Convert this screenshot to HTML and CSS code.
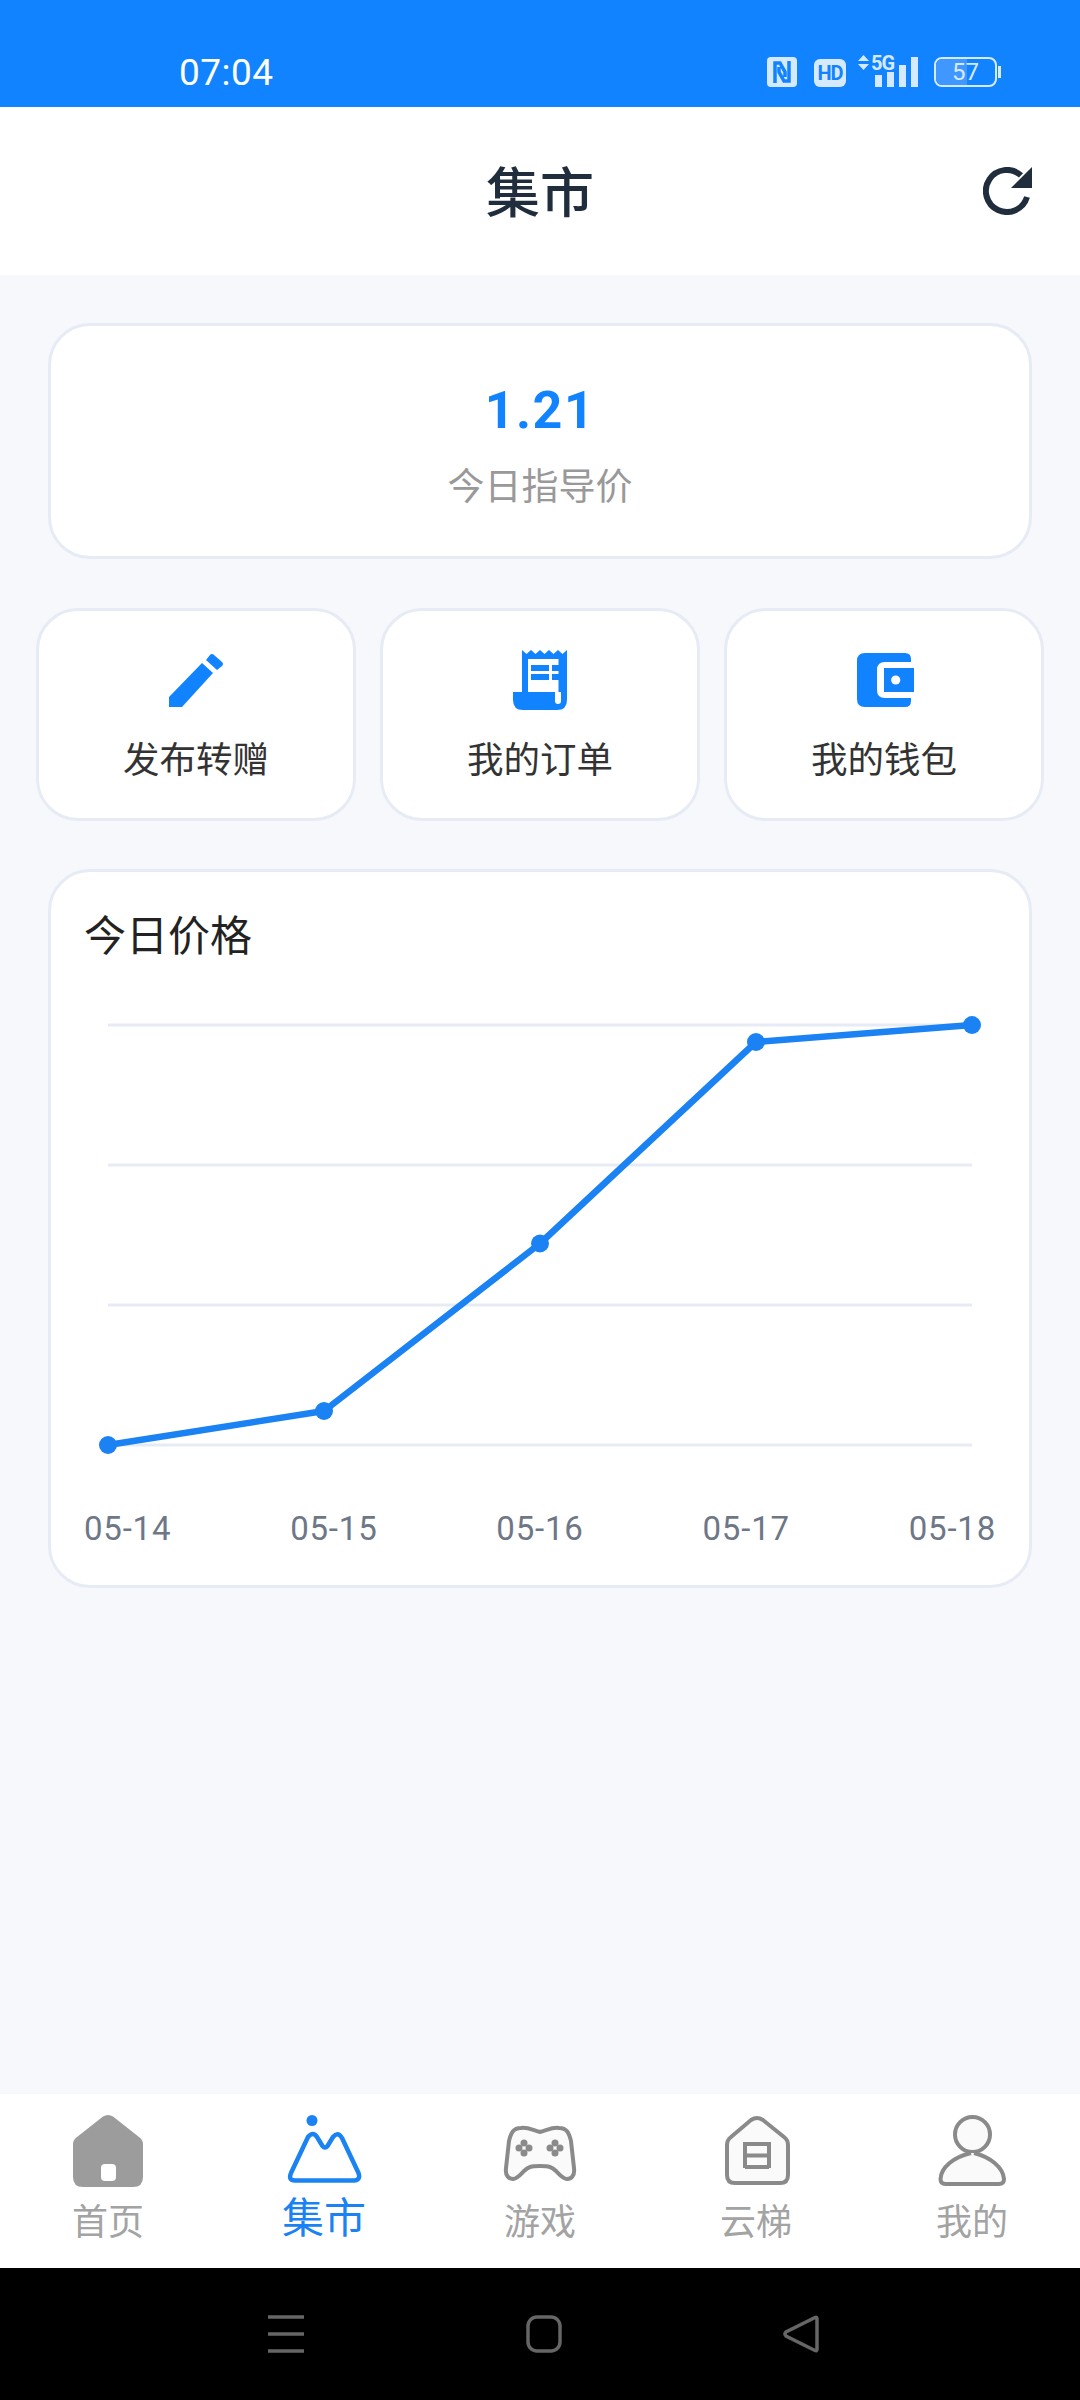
FILE: index.html
```html
<!DOCTYPE html>
<html lang="zh-CN">
<head>
<meta charset="UTF-8">
<meta name="viewport" content="width=device-width, initial-scale=1.0">
<title>集市</title>
<link rel="stylesheet" href="styles.css">
</head>
<body>

<div class="phone">
    <div class="status-bar">
        <span class="clock">07:04</span>
        <div class="status-icons">
            <svg width="30" height="30" viewBox="0 0 30 30">
                <rect width="30" height="30" rx="4" fill="#d6eaff"/>
                <path d="M8 26V6h5l5 9v5M22 4v20h-5l-5-9v-5" fill="none" stroke="#1283ff" stroke-width="3.500"/>
            </svg>
            <span class="hd">HD</span>
            <div class="signal">
                <svg width="11" height="15" viewBox="0 0 11 15"><path d="M5.500 0L11 6H0zM5.500 15L0 9h11z" fill="#d6eaff"/></svg>
                <span class="five-g">5G</span>
                <div class="bars">
                    <i class="b1"></i><i class="b2"></i><i class="b3"></i><i class="b4"></i>
                </div>
            </div>
            <div class="battery">
                <div class="battery-fill"></div>
                <span class="battery-num">57</span>
            </div>
            <div class="battery-tip"></div>
        </div>
    </div>

    <div class="header">
        <h1>集市</h1>
        <svg class="refresh" width="50" height="48" viewBox="0 0 50 48">
            <path d="M44 30A21 21 0 1 1 38 8.400" fill="none" stroke="#1f2d3d" stroke-width="6"/>
            <path d="M49 0v21H28z" fill="#1f2d3d"/>
        </svg>
    </div>

    <div class="content">
        <div class="card price-card">
            <div class="price">1.21</div>
            <div class="price-label">今日指导价</div>
        </div>

        <div class="tiles">
            <div class="tile">
                <svg width="54" height="60" viewBox="0 0 54 60">
                    <path d="M0 47L33 13l11 10-31 34H0z" fill="#1283ff"/>
                    <path d="M37 10l4-5q2-2 4 0l8 7q2 2 0 4l-5 4z" fill="#1283ff"/>
                </svg>
                <span>发布转赠</span>
            </div>
            <div class="tile">
                <svg width="54" height="60" viewBox="0 0 54 60">
                    <path d="M9 0l4.500 4L18 0l4.500 4L27 0l4.500 4L36 0l4.500 4L45 0l4.500 4L54 0v50q0 10-10 10H10Q0 60 0 50v-8h9z" fill="#1283ff"/>
                    <path d="M15 9h30.500v33H48v9q0 3-3 3t-3-3v-9H15z" fill="#fff"/>
                    <path d="M18 15h18v6H18zM39 15h7v6h-7zM18 24h18v6H18zM39 24h7v6h-7z" fill="#1283ff"/>
                </svg>
                <span>我的订单</span>
            </div>
            <div class="tile">
                <svg class="wallet" width="54" height="60" viewBox="0 0 54 60">
                    <path d="M8 3h40q6 0 6 6v3H28q-8 0-8 8v20q0 8 8 8h26v3q0 6-6 6H8q-8 0-8-8V11q0-8 8-8z" fill="#1283ff"/>
                    <path d="M27 18h30v24H27z" fill="#1283ff"/>
                    <circle cx="38.700" cy="30" r="4.600" fill="#fff"/>
                </svg>
                <span>我的钱包</span>
            </div>
        </div>

        <div class="card chart-card">
            <div class="chart-title">今日价格</div>
            <svg class="chart" width="984" height="520" viewBox="0 0 984 520">
                <g stroke="#e6ebf5" stroke-width="3">
                    <line x1="60" y1="85" x2="924" y2="85"/>
                    <line x1="60" y1="225" x2="924" y2="225"/>
                    <line x1="60" y1="365" x2="924" y2="365"/>
                    <line x1="60" y1="505" x2="924" y2="505"/>
                </g>
                <polyline points="60,505 276,471 492,303.500 708,102 924,85" fill="none" stroke="#1a82f2" stroke-width="6.500" stroke-linejoin="round"/>
                <g fill="#1a82f2">
                    <circle cx="60" cy="505" r="9"/>
                    <circle cx="276" cy="471" r="9"/>
                    <circle cx="492" cy="303.500" r="9"/>
                    <circle cx="708" cy="102" r="9"/>
                    <circle cx="924" cy="85" r="9"/>
                </g>
            </svg>
            <div class="chart-labels">
                <span>05-14</span><span>05-15</span><span>05-16</span><span>05-17</span><span>05-18</span>
            </div>
        </div>
    </div>

    <div class="tabbar">
        <div class="tab">
            <svg width="76" height="72" viewBox="0 0 76 72">
                <path d="M33 1.500q5-3 10 0L69 22q4 3 4 7v33q0 10-10 10H13Q3 72 3 62V29q0-4 4-7z" fill="#9c9c9c"/>
                <rect x="31" y="49" width="15" height="17" rx="4" fill="#fff"/>
            </svg>
            <span>首页</span>
        </div>
        <div class="tab active">
            <svg width="76" height="72" viewBox="0 0 76 72">
                <circle cx="26" cy="5.500" r="5.500" fill="#1a82f2"/>
                <path d="M9 65.500h59q7-.5 4.500-7.500L56 23q-4-7-9-1l-5.500 9q-2.500 3-5 0L31 22q-4-6-9-0L5 58q-3 7.500 4 7.500z" fill="none" stroke="#1a82f2" stroke-width="4.500" stroke-linejoin="round"/>
            </svg>
            <span>集市</span>
        </div>
        <div class="tab">
            <svg width="76" height="72" viewBox="0 0 76 72">
                <path d="M19 13c7-1 11 2 19 4 8-2 12-5 19-4 8 0 10 5 12 13l3 27c1 8-3 11-7 11s-8-5-11-8c-4-4-7-5-16-5s-12 1-16 5c-3 3-7 8-11 8s-8-3-7-11l3-27c2-8 4-13 12-13z" fill="#fafafa" stroke="#8a8a8a" stroke-width="4"/>
                <g fill="#8a8a8a">
                    <circle cx="22" cy="28" r="3.500"/><circle cx="22" cy="38" r="3.500"/><circle cx="17" cy="33" r="3.500"/><circle cx="27" cy="33" r="3.500"/>
                    <circle cx="53" cy="28" r="3.500"/><circle cx="53" cy="38" r="3.500"/><circle cx="48" cy="33" r="3.500"/><circle cx="58" cy="33" r="3.500"/>
                </g>
            </svg>
            <span>游戏</span>
        </div>
        <div class="tab">
            <svg width="76" height="72" viewBox="0 0 76 72">
                <path d="M33 5q6-4 12 0l21 17q4 3 4 8v30q0 8-8 8H17q-8 0-8-8V30q0-5 4-8z" fill="#fafafa" stroke="#8a8a8a" stroke-width="4"/>
                <path d="M27 27v26M51 27v26M27 29h24M27 40.500h24M27 52h24" fill="none" stroke="#8a8a8a" stroke-width="4"/>
            </svg>
            <span>云梯</span>
        </div>
        <div class="tab">
            <svg width="76" height="72" viewBox="0 0 76 72">
                <circle cx="38.500" cy="19.500" r="17.500" fill="#fafafa" stroke="#8a8a8a" stroke-width="4"/>
                <path d="M37 38C20 42 7 52 6.500 64q0 5 5 5H65q5 0 5-5C69 52 56 42 40 38" fill="#fafafa" stroke="#8a8a8a" stroke-width="4"/>
            </svg>
            <span>我的</span>
        </div>
    </div>

    <div class="navbar">
        <svg width="36" height="38" viewBox="0 0 36 38">
            <path d="M0 2h36M0 19h36M0 36h36" stroke="#666" stroke-width="3.500"/>
        </svg>
        <svg width="36" height="38" viewBox="0 0 36 38">
            <rect x="2" y="2" width="32" height="34" rx="9" fill="none" stroke="#666" stroke-width="3.500"/>
        </svg>
        <svg width="36" height="38" viewBox="0 0 36 38">
            <path d="M32 2.500q2-1 2 1.500v30q0 2.500-2 1.500L3 21q-2-2 0-4z" fill="none" stroke="#666" stroke-width="3.500"/>
        </svg>
    </div>
</div>

</body>
</html>
```

FILE: styles.css
```css
body {
    font-family: "Noto Sans CJK SC", Roboto, sans-serif;
    background-color: #f6f8fc;
    margin: 0;
    padding: 0;
}

.phone {
    width: 1080px;
    height: 2400px;
    display: flex;
    flex-direction: column;
    overflow: hidden;
}

.status-bar {
    height: 107px;
    flex: none;
    background-color: #1283ff;
    display: flex;
    align-items: flex-end;
    justify-content: space-between;
    padding: 0 79px 20px 179px;
    box-sizing: border-box;
    color: #fff;
}

.clock {
    font-family: Roboto, sans-serif;
    font-size: 37px;
    line-height: 38px;
    letter-spacing: 0.5px;
    margin-bottom: -5px;
}

.status-icons {
    display: flex;
    align-items: flex-end;
    height: 30px;
}

.hd {
    width: 32px;
    height: 28px;
    margin-left: 17px;
    background-color: #d6eaff;
    border-radius: 6px;
    text-align: center;
    font-family: Roboto, sans-serif;
    font-size: 20px;
    line-height: 28px;
    font-weight: 700;
    letter-spacing: -1px;
    color: #1283ff;
}

.signal {
    width: 60px;
    height: 30px;
    margin-left: 12px;
    position: relative;
}

.signal svg {
    position: absolute;
    left: 0;
    top: -2px;
}

.five-g {
    position: absolute;
    left: 13px;
    top: -4px;
    font-family: Roboto, sans-serif;
    font-size: 20px;
    line-height: 20px;
    font-weight: 700;
    letter-spacing: -1px;
    color: #d6eaff;
}

.bars {
    position: absolute;
    left: 17px;
    bottom: 0;
    display: flex;
    align-items: flex-end;
    gap: 5px;
}

.bars i {
    display: block;
    width: 7px;
    background-color: #d6eaff;
}

.b1 { height: 12px; }
.b2 { height: 15px; }
.b3 { height: 22px; }
.b4 { height: 30px; }

.battery {
    width: 63px;
    height: 30px;
    margin-left: 16px;
    border: 2px solid #d6eaff;
    border-radius: 8px;
    box-sizing: border-box;
    position: relative;
    overflow: hidden;
}

.battery-fill {
    width: 52%;
    height: 100%;
    background-color: #3f97ff;
}

.battery-num {
    position: absolute;
    left: 0;
    right: 0;
    top: 0;
    text-align: center;
    font-family: Roboto, sans-serif;
    font-size: 24px;
    line-height: 26px;
    color: #d6eaff;
}

.battery-tip {
    width: 3px;
    height: 12px;
    margin: 0 0 9px 1px;
    background-color: #d6eaff;
}

.header {
    height: 168px;
    flex: none;
    background-color: #fff;
    display: flex;
    align-items: center;
    justify-content: center;
    position: relative;
}

.header h1 {
    margin: 0;
    font-size: 54px;
    font-weight: 500;
    color: #1f2d3d;
    position: relative;
    top: -2px;
}

.refresh {
    position: absolute;
    left: 983px;
    top: 60px;
}

.content {
    flex: 1;
    padding: 48px 36px 0;
}

.card {
    background-color: #fff;
    border: 3px solid #e6ebf5;
    border-radius: 42px;
    box-sizing: border-box;
    margin: 0 12px;
}

.price-card {
    height: 236px;
    display: flex;
    flex-direction: column;
    align-items: center;
}

.price {
    margin-top: 55px;
    font-family: Roboto, sans-serif;
    font-size: 52px;
    line-height: 60px;
    font-weight: 700;
    letter-spacing: 1.5px;
    color: #1283ff;
}

.price-label {
    margin-top: 18px;
    font-size: 37px;
    line-height: 50px;
    color: #999;
}

.tiles {
    display: grid;
    grid-template-columns: repeat(3, 320px);
    gap: 24px;
    margin-top: 49px;
}

.tile {
    height: 213px;
    background-color: #fff;
    border: 3px solid #e6ebf5;
    border-radius: 42px;
    box-sizing: border-box;
    display: flex;
    flex-direction: column;
    align-items: center;
    padding-top: 39px;
    color: #333;
    font-size: 36.5px;
    line-height: 50px;
}

.tile svg {
    margin-bottom: 23px;
}

.wallet {
    overflow: visible;
}

.chart-card {
    height: 719px;
    margin-top: 48px;
    padding: 31px 33px 0;
    position: relative;
}

.chart-title {
    font-size: 42px;
    line-height: 60px;
    color: #222;
}

.chart {
    position: absolute;
    left: -3px;
    top: 68px;
    overflow: visible;
}

.chart-labels {
    position: absolute;
    left: 33px;
    right: 33px;
    top: 635px;
    display: flex;
    justify-content: space-between;
    font-family: Roboto, sans-serif;
    font-size: 33px;
    line-height: 44px;
    letter-spacing: 0.8px;
    color: #6e7787;
}

.tabbar {
    height: 174px;
    flex: none;
    background-color: #fff;
    display: grid;
    grid-template-columns: repeat(5, 216px);
}

.tab {
    display: flex;
    flex-direction: column;
    align-items: center;
    padding-top: 21px;
    color: #a3a3a3;
    font-size: 36px;
    line-height: 48px;
}

.tab svg {
    margin-bottom: 8px;
}

.tab.active {
    color: #1a82f2;
    font-size: 42px;
}

.tab.active svg {
    margin-bottom: 4px;
}

.navbar {
    height: 132px;
    flex: none;
    background-color: #000;
    display: flex;
    align-items: center;
    justify-content: space-between;
    padding: 0 261px 0 268px;
}
```
